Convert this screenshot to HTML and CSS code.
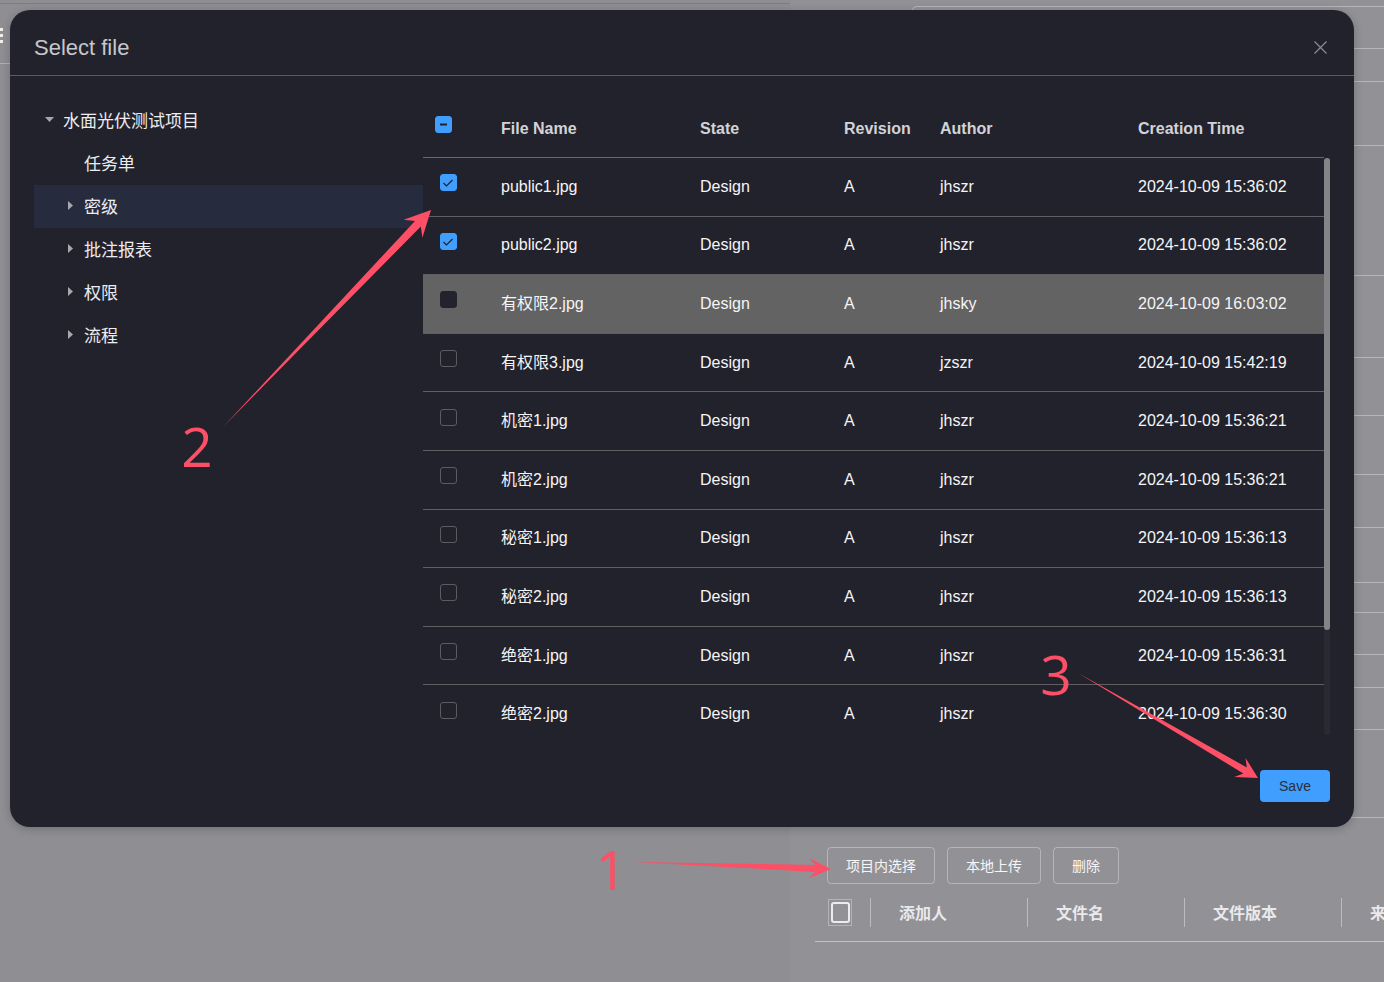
FILE: index.html
```html
<!DOCTYPE html>
<html lang="zh-CN">
<head>
<meta charset="utf-8">
<title>Select file</title>
<link rel="stylesheet" href="styles.css">
</head>
<body>
<div class="page">
  <aside class="side">
    <div class="side-top"></div>
    <div class="side-menu"><i></i><i></i><i></i></div>
    <div class="side-line"></div>
  </aside>
  <main class="main">
    <div class="bg-list">
      <div class="bg-row"></div><div class="bg-row"></div><div class="bg-row"></div><div class="bg-row"></div>
      <div class="bg-row"></div><div class="bg-row"></div><div class="bg-row"></div><div class="bg-row"></div>
      <div class="bg-row"></div><div class="bg-row"></div><div class="bg-row"></div><div class="bg-row"></div>
      <div class="bg-row"></div><div class="bg-row"></div>
    </div>
    <div class="toolbar">
      <button class="tb-btn">项目内选择</button>
      <button class="tb-btn">本地上传</button>
      <button class="tb-btn">删除</button>
    </div>
    <div class="bg-thead">
      <div class="bg-check-col"><span class="bg-check"><span></span></span></div>
      <div class="bg-th">添加人</div>
      <div class="bg-th">文件名</div>
      <div class="bg-th">文件版本</div>
      <div class="bg-th">来</div>
    </div>
  </main>
</div>

<div class="modal">
  <header class="modal-header">
    <h2 class="modal-title">Select file</h2>
    <button class="modal-close" aria-label="Close">
      <svg width="13" height="13" viewBox="0 0 13 13"><path d="M0.5 0.5 L12.5 12.5 M12.5 0.5 L0.5 12.5" stroke="#8c8c92" stroke-width="1.2" fill="none"/></svg>
    </button>
  </header>
  <div class="modal-body">
    <nav class="tree">
      <div class="node lvl1"><span class="caret"><svg width="9" height="5" viewBox="0 0 9 5"><polygon points="0,0 9,0 4.5,5" fill="#a7a7ac"/></svg></span><span>水面光伏测试项目</span></div>
      <div class="node lvl2"><span class="caret"></span><span>任务单</span></div>
      <div class="node lvl2 selected"><span class="caret"><svg class="right" width="5" height="9" viewBox="0 0 5 9"><polygon points="0,0 5,4.5 0,9" fill="#a7a7ac"/></svg></span><span>密级</span></div>
      <div class="node lvl2"><span class="caret"><svg class="right" width="5" height="9" viewBox="0 0 5 9"><polygon points="0,0 5,4.5 0,9" fill="#a7a7ac"/></svg></span><span>批注报表</span></div>
      <div class="node lvl2"><span class="caret"><svg class="right" width="5" height="9" viewBox="0 0 5 9"><polygon points="0,0 5,4.5 0,9" fill="#a7a7ac"/></svg></span><span>权限</span></div>
      <div class="node lvl2"><span class="caret"><svg class="right" width="5" height="9" viewBox="0 0 5 9"><polygon points="0,0 5,4.5 0,9" fill="#a7a7ac"/></svg></span><span>流程</span></div>
    </nav>
    <section class="files">
      <div class="thead">
        <div class="cell-check"><span class="cb on head"><svg width="15" height="15" viewBox="0 0 15 15"><path d="M4 7.5 H11" stroke="#22222c" stroke-width="2"/></svg></span></div>
        <div>File Name</div>
        <div>State</div>
        <div>Revision</div>
        <div>Author</div>
        <div>Creation Time</div>
      </div>
      <div class="table-scroll">
        <div class="tbody">
          <div class="row">
            <div class="cell-check"><span class="cb on"><svg width="15" height="15" viewBox="0 0 15 15"><path d="M2.5 8 L5.5 11 L11.5 5" stroke="#22222c" stroke-width="1.2" fill="none"/></svg></span></div>
            <div>public1.jpg</div><div>Design</div><div>A</div><div>jhszr</div><div>2024-10-09 15:36:02</div>
          </div>
          <div class="row">
            <div class="cell-check"><span class="cb on"><svg width="15" height="15" viewBox="0 0 15 15"><path d="M2.5 8 L5.5 11 L11.5 5" stroke="#22222c" stroke-width="1.2" fill="none"/></svg></span></div>
            <div>public2.jpg</div><div>Design</div><div>A</div><div>jhszr</div><div>2024-10-09 15:36:02</div>
          </div>
          <div class="row hover">
            <div class="cell-check"><span class="cb dark"></span></div>
            <div>有权限2.jpg</div><div>Design</div><div>A</div><div>jhsky</div><div>2024-10-09 16:03:02</div>
          </div>
          <div class="row">
            <div class="cell-check"><span class="cb"></span></div>
            <div>有权限3.jpg</div><div>Design</div><div>A</div><div>jzszr</div><div>2024-10-09 15:42:19</div>
          </div>
          <div class="row">
            <div class="cell-check"><span class="cb"></span></div>
            <div>机密1.jpg</div><div>Design</div><div>A</div><div>jhszr</div><div>2024-10-09 15:36:21</div>
          </div>
          <div class="row">
            <div class="cell-check"><span class="cb"></span></div>
            <div>机密2.jpg</div><div>Design</div><div>A</div><div>jhszr</div><div>2024-10-09 15:36:21</div>
          </div>
          <div class="row">
            <div class="cell-check"><span class="cb"></span></div>
            <div>秘密1.jpg</div><div>Design</div><div>A</div><div>jhszr</div><div>2024-10-09 15:36:13</div>
          </div>
          <div class="row">
            <div class="cell-check"><span class="cb"></span></div>
            <div>秘密2.jpg</div><div>Design</div><div>A</div><div>jhszr</div><div>2024-10-09 15:36:13</div>
          </div>
          <div class="row">
            <div class="cell-check"><span class="cb"></span></div>
            <div>绝密1.jpg</div><div>Design</div><div>A</div><div>jhszr</div><div>2024-10-09 15:36:31</div>
          </div>
          <div class="row">
            <div class="cell-check"><span class="cb"></span></div>
            <div>绝密2.jpg</div><div>Design</div><div>A</div><div>jhszr</div><div>2024-10-09 15:36:30</div>
          </div>
        </div>
        <div class="scrollbar"><div class="thumb"></div></div>
      </div>
    </section>
  </div>
  <footer class="modal-footer">
    <button class="btn-save">Save</button>
  </footer>
</div>

<svg class="annotations" width="1384" height="982" viewBox="0 0 1384 982">
  <polygon class="arrow" points="223,427 420.8,226.5 422.4,237.8 431,210 403.6,219.8 415,221 223,427"/>
  <polygon class="arrow" points="1078,673 1243.3,773.4 1234.3,776.9 1258,778 1245.5,757.9 1246.8,767.4 1078,673"/>
  <polygon class="arrow" points="634,862 814.9,871.9 808.7,878.2 831,869 809.4,858.2 815.1,864.9 634,862"/>
  <text class="anno-num" x="611" y="890">1</text>
  <text class="anno-num" x="197" y="467">2</text>
  <text class="anno-num" x="1056" y="695">3</text>
</svg>
</body>
</html>
```
FILE: styles.css
```css
* { box-sizing: border-box; }
html, body { margin: 0; padding: 0; }
body {
  width: 1384px;
  height: 982px;
  overflow: hidden;
  position: relative;
  background: #929196;
  font-family: "Liberation Sans", "Noto Sans CJK SC", sans-serif;
}
button { font-family: inherit; cursor: pointer; }

/* ---------- background page (dimmed) ---------- */
.page { display: flex; height: 982px; }
.side { width: 790px; flex: none; background: #8f8e93; }
.side-top { height: 4px; border-bottom: 1px solid #7d7c81; }
.side-menu { width: 4px; margin-top: 24px; display: flex; flex-direction: column; gap: 3px; }
.side-menu i { display: block; width: 3px; height: 3px; background: #f3eee8; }
.side-line { width: 10px; margin-top: 20px; border-top: 1px solid #b2b1b6; }

.main { flex: 1; display: flex; flex-direction: column; min-width: 0; }
.bg-list {
  margin: 6px 0 0 122px;
  border-top: 1px solid #b7b6bb;
  border-left: 1px solid #b7b6bb;
  border-top-left-radius: 5px;
}
.bg-row { border-bottom: 1px solid #b7b6bb; }
.bg-row:nth-child(1) { height: 42px; }
.bg-row:nth-child(2) { height: 33px; }
.bg-row:nth-child(3) { height: 64px; }
.bg-row:nth-child(4) { height: 130px; }
.bg-row:nth-child(5) { height: 82px; }
.bg-row:nth-child(6) { height: 58px; }
.bg-row:nth-child(7) { height: 59px; }
.bg-row:nth-child(8) { height: 53px; }
.bg-row:nth-child(9) { height: 55px; }
.bg-row:nth-child(10) { height: 30px; }
.bg-row:nth-child(11) { height: 42px; }
.bg-row:nth-child(12) { height: 33px; }
.bg-row:nth-child(13) { height: 42px; }
.bg-row:nth-child(14) { height: 88px; }

.toolbar { margin: 29px 0 0 37px; display: flex; gap: 12px; }
.tb-btn {
  height: 37px;
  padding: 0 18px 2px;
  border: 1px solid rgba(255, 255, 255, 0.32);
  border-radius: 4px;
  background: transparent;
  color: #f6f6f8;
  font: 14px "Noto Sans CJK SC", sans-serif;
}

.bg-thead {
  margin-left: 25px;
  height: 58px;
  border-bottom: 1px solid #c2c1c6;
  display: flex;
  align-items: center;
  white-space: nowrap;
}
.bg-check-col { width: 55px; flex: none; padding-left: 13px; display: flex; align-items: center; }
.bg-check {
  width: 24px; height: 27px;
  border: 1px solid rgba(255, 255, 255, 0.3);
  display: flex; align-items: center; justify-content: center;
}
.bg-check span {
  width: 19px; height: 21px;
  border: 2px solid #ececef;
  border-radius: 3px;
}
.bg-th {
  flex: none;
  width: 157px;
  height: 29px;
  border-left: 1px solid #bdbcc1;
  padding: 0 0 1px 28px;
  display: flex;
  align-items: center;
  font: bold 16px "Noto Sans CJK SC", sans-serif;
  color: #e9e9ec;
}

/* ---------- modal ---------- */
.modal {
  position: absolute;
  left: 10px;
  top: 10px;
  width: 1344px;
  height: 817px;
  background: #22222c;
  border-radius: 20px;
  box-shadow: 0 2px 10px rgba(0, 0, 0, 0.22);
  display: flex;
  flex-direction: column;
  overflow: hidden;
  z-index: 5;
}
.modal-header {
  flex: none;
  height: 66px;
  padding: 10px 27px 0 24px;
  border-bottom: 1px solid #5b5b60;
  display: flex;
  align-items: center;
  justify-content: space-between;
}
.modal-title {
  margin: 0;
  font-size: 22px;
  font-weight: normal;
  color: #c7c7cb;
}
.modal-close {
  width: 13px; height: 13px;
  padding: 0; border: 0; background: none;
  display: flex;
}
.modal-body {
  flex: 1;
  min-height: 0;
  display: flex;
  padding: 23px 24px 0;
}

/* tree */
.tree { width: 389px; flex: none; }
.node {
  height: 43px;
  display: flex;
  align-items: center;
  padding-bottom: 2px;
  font: 17px "Noto Sans CJK SC", sans-serif;
  color: #ececf0;
}
.node.lvl1 { padding-left: 8px; }
.node.lvl2 { padding-left: 29px; }
.node.selected { background: #262b3e; }
.caret { width: 21px; flex: none; display: flex; align-items: center; }
.caret svg { margin-left: 3px; }
.caret svg.right { margin-left: 5px; }

/* table */
.files { flex: 1; min-width: 0; display: flex; flex-direction: column; }
.thead, .row {
  display: grid;
  grid-template-columns: 78px 199px 144px 96px 198px 1fr;
  align-items: center;
  line-height: 20px;
}
.thead {
  flex: none;
  height: 59px;
  padding-top: 2px;
  margin-right: 6px;
  border-bottom: 1px solid #68686d;
  font-weight: bold;
  font-size: 16px;
  color: #d3d3d7;
}
.table-scroll { flex: 1; min-height: 0; display: flex; }
.tbody { flex: 1; min-width: 0; overflow: hidden; }
.scrollbar {
  width: 6px;
  flex: none;
  background: #2a2a33;
  border-radius: 3px;
}
.thumb { height: 472px; background: #838388; border-radius: 3px; }
.row {
  height: 58.6px;
  border-bottom: 1px solid #5e5e63;
  font-size: 16px;
  color: #f5f5f7;
}
.row.hover { background: #636363; }
.cell-check { padding-left: 17px; display: flex; align-items: center; }
.thead .cell-check { padding-left: 12px; }
.cb {
  width: 17px; height: 17px;
  border: 1px solid #5b5b61;
  border-radius: 3px;
  margin-bottom: 8px;
  display: flex; align-items: center; justify-content: center;
}
.thead .cb { margin-bottom: 9px; }
.cb.on { background: #409eff; border-color: #409eff; }
.cb.dark { background: #23232d; border-color: #23232d; }

/* footer */
.modal-footer {
  flex: none;
  height: 92px;
  padding: 35px 24px 25px;
  display: flex;
  justify-content: flex-end;
}
.btn-save {
  width: 70px; height: 32px;
  border: 0;
  border-radius: 4px;
  background: #409eff;
  color: #2b2f3a;
  font-size: 14px;
}

/* annotations overlay */
.annotations {
  position: absolute;
  left: 0; top: 0;
  z-index: 10;
  pointer-events: none;
}
.arrow { fill: #fd4f66; }
.anno-num {
  font-family: "Open Sans", "DejaVu Sans", sans-serif;
  font-weight: 400;
  font-size: 55px;
  fill: #fd4f66;
  text-anchor: middle;
}
```
